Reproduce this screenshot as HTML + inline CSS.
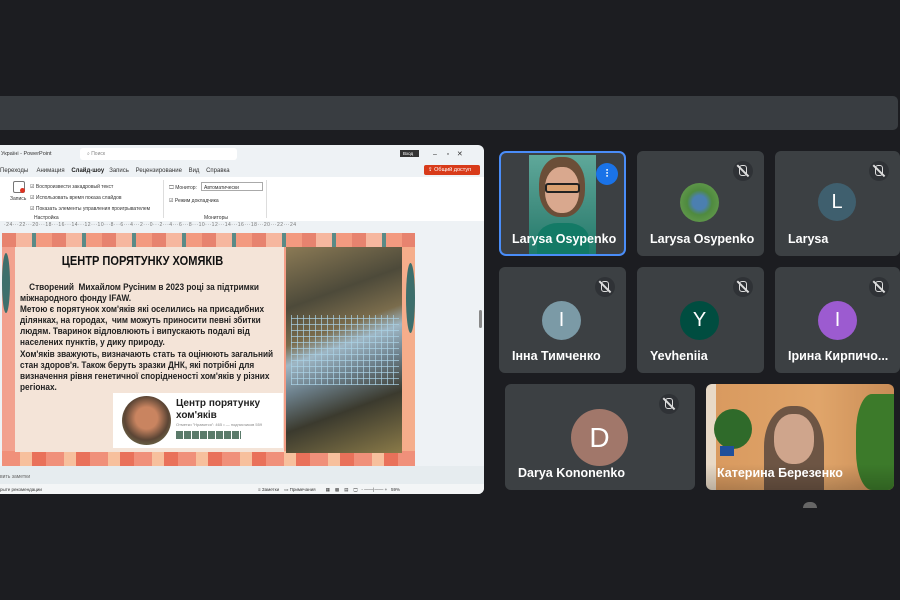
<!DOCTYPE html>
<html><head><meta charset="utf-8"><style>
*{margin:0;padding:0;box-sizing:border-box}
body{width:900px;height:600px;background:#1c1d21;position:relative;overflow:hidden;font-family:"Liberation Sans","DejaVu Sans",sans-serif}
.a{position:absolute}
.tile{position:absolute;background:#3c4043;border-radius:6px;overflow:hidden}
.nm{position:absolute;left:13px;bottom:10px;color:#fff;font-size:12.5px;font-weight:bold;white-space:nowrap}
.av{position:absolute;border-radius:50%;color:#fff;text-align:center;font-size:20px}
.mic{position:absolute;width:20px;height:20px;border-radius:50%;background:#2f3236;top:10px;right:11px}
.pp{font-size:5px;color:#333;white-space:nowrap}
.sl{font-size:9.6px;font-weight:bold;color:#222;line-height:11.1px;white-space:nowrap;transform:scaleX(.86);transform-origin:0 0}
</style></head><body>
<div class="a" style="left:0;top:96px;width:898px;height:34px;background:#393d41;border-radius:0 5px 5px 0"></div>

<div class="a" style="left:0;top:145px;width:484px;height:349px;background:#eef2f5;border-radius:0 6px 6px 0;overflow:hidden">
 <div class="a pp" style="left:1px;top:6px;font-size:5.5px">Україні - PowerPoint</div>
 <div class="a" style="left:80px;top:3px;width:157px;height:12px;background:#fff;border-radius:3px"></div>
 <div class="a pp" style="left:87px;top:6px;color:#888">⌕ Поиск</div>
 <div class="a" style="left:400px;top:5px;width:19px;height:7px;background:#333"></div>
 <div class="a pp" style="left:403px;top:6px;color:#fff;font-size:4.5px">Вход</div>
 <div class="a pp" style="left:433px;top:5px;font-size:7px">–&nbsp;&nbsp;&nbsp;&nbsp;&nbsp;▫&nbsp;&nbsp;&nbsp;&nbsp;✕</div>
 <div class="a pp" style="left:0;top:23px;font-size:6px">Переходы&nbsp;&nbsp;&nbsp;&nbsp;&nbsp;Анимация&nbsp;&nbsp;&nbsp;&nbsp;<b style="color:#222">Слайд-шоу</b>&nbsp;&nbsp;&nbsp;Запись&nbsp;&nbsp;&nbsp;&nbsp;Рецензирование&nbsp;&nbsp;&nbsp;&nbsp;Вид&nbsp;&nbsp;&nbsp;&nbsp;Справка</div>
 <div class="a" style="left:72px;top:32px;width:32px;height:1px;background:#c43e1c"></div>
 <div class="a" style="left:424px;top:20px;width:56px;height:10px;background:#d83b1a;border-radius:2px"></div>
 <div class="a pp" style="left:428px;top:22px;color:#fff;font-size:5.5px">⇪ Общий доступ</div>
 <div class="a" style="left:0;top:32px;width:484px;height:44px;background:#fff"></div>
 <div class="a" style="left:13px;top:36px;width:12px;height:12px;border:1px solid #777;border-radius:2px"></div>
 <div class="a" style="left:20px;top:43px;width:5px;height:5px;border-radius:50%;background:#d32"></div>
 <div class="a pp" style="left:10px;top:51px">Запись</div>
 <div class="a pp" style="left:30px;top:37px;line-height:11px">☑ Воспроизвести закадровый текст<br>☑ Использовать время показа слайдов<br>☑ Показать элементы управления проигрывателем</div>
 <div class="a pp" style="left:34px;top:70px">Настройка</div>
 <div class="a" style="left:163px;top:35px;width:1px;height:38px;background:#ddd"></div>
 <div class="a pp" style="left:169px;top:40px">🖵 Монитор:</div>
 <div class="a" style="left:201px;top:37px;width:62px;height:9px;border:1px solid #aaa"></div>
 <div class="a pp" style="left:204px;top:40px">Автоматически</div>
 <div class="a pp" style="left:169px;top:53px">☑ Режим докладчика</div>
 <div class="a pp" style="left:204px;top:70px">Мониторы</div>
 <div class="a" style="left:266px;top:35px;width:1px;height:38px;background:#ddd"></div>
 <div class="a pp" style="left:4px;top:77px;color:#777;letter-spacing:.5px">·24···22···20···18···16···14···12···10···8···6···4···2···0···2···4···6···8···10···12···14···16···18···20···22···24</div>
 <div class="a" style="left:479px;top:165px;width:3px;height:18px;background:#888;border-radius:2px"></div>
 <div class="a" style="left:2px;top:88px;width:413px;height:233px;background:linear-gradient(90deg,#f2a08e,#f7b59c 30%,#f49a86 60%,#f5ae8b);overflow:hidden">
  <div class="a" style="left:0;top:0;width:413px;height:14px;background:repeating-linear-gradient(90deg,#e7836f 0 14px,#f6b79f 14px 30px,#5a8a86 30px 34px,#f39a80 34px 50px)"></div>
  <div class="a" style="left:0;top:218px;width:413px;height:15px;background:repeating-linear-gradient(90deg,#f0907a 0 18px,#f7c09d 18px 30px,#e9715a 30px 44px)"></div>
  <div class="a" style="left:0;top:20px;width:8px;height:60px;background:#3d6f6c;border-radius:50%"></div>
  <div class="a" style="left:404px;top:30px;width:9px;height:70px;background:#3d6f6c;border-radius:50%"></div>
 </div>
 <div class="a" style="left:15px;top:102px;width:269px;height:205px;background:#f4e4d8"></div>
 <div class="a" style="left:15px;top:108px;width:300px;text-align:center;font-size:13px;font-weight:bold;color:#111;transform:scaleX(.85);transform-origin:0 0">ЦЕНТР ПОРЯТУНКУ ХОМЯКІВ</div>
 <div class="a sl" style="left:20px;top:137px">
 &nbsp;&nbsp;&nbsp;&nbsp;Створений&nbsp; Михайлом Русіним в 2023 році за підтримки<br>міжнародного фонду IFAW.<br>Метою є порятунок хом'яків які оселились на присадибних<br>ділянках, на городах,&nbsp; чим можуть приносити певні збитки<br>людям. Тваринок відловлюють і випускають подалі від<br>населених пунктів, у дику природу.<br>Хом'яків зважують, визначають стать та оцінюють загальний<br>стан здоров'я. Також беруть зразки ДНК, які потрібні для<br>визначення рівня генетичної спорідненості хом'яків у різних<br>регіонах.</div>
 <div class="a" style="left:113px;top:248px;width:170px;height:55px;background:#fff"></div>
 <div class="a" style="left:122px;top:251px;width:49px;height:49px;border-radius:50%;background:radial-gradient(circle at 50% 45%,#c98460 0 30%,#5b4535 60%,#7c8a5c)"></div>
 <div class="a" style="left:176px;top:253px;font-size:10px;font-weight:bold;color:#222;line-height:12px">Центр порятунку<br>хом'яків</div>
 <div class="a pp" style="left:176px;top:277px;color:#888;font-size:4px">Отметки "Нравится": 465 • — подписчиков 559</div>
 <div class="a" style="left:176px;top:286px;width:65px;height:8px;background:repeating-linear-gradient(90deg,#5a7a6a 0 7px,#fff 7px 8px)"></div>
 <div class="a" style="left:286px;top:102px;width:116px;height:206px;background:linear-gradient(160deg,#8b7a55,#4d4a3a 25%,#7a6c4c 40%,#9fb7c5 48%,#6c7f8a 60%,#3b3a2e 75%,#8a7a48)"></div>
 <div class="a" style="left:291px;top:170px;width:108px;height:70px;background:repeating-linear-gradient(90deg,rgba(170,210,230,.7) 0 1px,transparent 1px 6px),repeating-linear-gradient(0deg,rgba(170,210,230,.7) 0 1px,transparent 1px 6px)"></div>
 <div class="a" style="left:0;top:321px;width:484px;height:18px;background:#e6ecef"></div>
 <div class="a pp" style="left:0;top:329px;color:#666">вить заметки</div>
 <div class="a" style="left:0;top:339px;width:484px;height:10px;background:#f3f5f6"></div>
 <div class="a pp" style="left:0;top:342px;font-size:4.5px">рыте рекомендации</div>
 <div class="a pp" style="left:258px;top:342px;font-size:4.5px">≡ Заметки&nbsp;&nbsp;&nbsp;&nbsp;▭ Примечания&nbsp;&nbsp;&nbsp;&nbsp;&nbsp;&nbsp;&nbsp;&nbsp;▦&nbsp;&nbsp;&nbsp;&nbsp;▩&nbsp;&nbsp;&nbsp;&nbsp;▤&nbsp;&nbsp;&nbsp;&nbsp;🖵&nbsp;&nbsp;&nbsp;- ——|—— +&nbsp;&nbsp;&nbsp;59%</div>
</div>

<div class="tile" style="left:499px;top:151px;width:127px;height:105px;border:2px solid #4a8df8;border-radius:7px">
 <div class="a" style="left:28px;top:2px;width:67px;height:101px;background:linear-gradient(180deg,#5fa89a,#3d8a7c 60%,#1e7a6a)"></div>
 <div class="a" style="left:38px;top:4px;width:46px;height:60px;border-radius:45%;background:#6b4e38"></div>
 <div class="a" style="left:44px;top:14px;width:34px;height:46px;border-radius:45%;background:#d9a88e"></div>
 <div class="a" style="left:44px;top:30px;width:35px;height:10px;background:#d9a070;border:2px solid #222;border-radius:3px"></div>
 <div class="a" style="left:36px;top:70px;width:52px;height:40px;border-radius:40% 40% 0 0;background:#137a66"></div>
 <div class="a" style="left:95px;top:10px;width:22px;height:22px;border-radius:50%;background:#1a73e8;color:#fff;font-size:11px;text-align:center;line-height:22px;font-weight:bold">⫶</div>
 <div class="nm" style="left:11px;bottom:8px">Larysa Osypenko</div>
</div>
<div class="tile" style="left:637px;top:151px;width:127px;height:105px">
 <div class="mic"></div>
 <div class="av" style="left:43px;top:32px;width:39px;height:39px;background:radial-gradient(circle,#4b7fb0 0 25%,#4f8a3f 45%,#6ea354)"></div>
 <div class="nm">Larysa Osypenko</div>
</div>
<div class="tile" style="left:775px;top:151px;width:125px;height:105px">
 <div class="mic"></div>
 <div class="av" style="left:43px;top:32px;width:38px;height:38px;background:#3f5f6e;line-height:38px">L</div>
 <div class="nm">Larysa</div>
</div>
<div class="tile" style="left:499px;top:267px;width:127px;height:106px">
 <div class="mic"></div>
 <div class="av" style="left:43px;top:34px;width:39px;height:39px;background:#7b9aa6;line-height:39px">I</div>
 <div class="nm">Інна Тимченко</div>
</div>
<div class="tile" style="left:637px;top:267px;width:127px;height:106px">
 <div class="mic"></div>
 <div class="av" style="left:43px;top:34px;width:39px;height:39px;background:#004d40;line-height:39px">Y</div>
 <div class="nm">Yevheniia</div>
</div>
<div class="tile" style="left:775px;top:267px;width:125px;height:106px">
 <div class="mic"></div>
 <div class="av" style="left:43px;top:34px;width:39px;height:39px;background:#9c5bd0;line-height:39px">I</div>
 <div class="nm">Ірина Кирпичо...</div>
</div>
<div class="tile" style="left:505px;top:384px;width:190px;height:106px">
 <div class="mic" style="right:16px"></div>
 <div class="av" style="left:66px;top:25px;width:57px;height:57px;background:#a1776a;line-height:57px;font-size:28px">D</div>
 <div class="nm">Darya Kononenko</div>
</div>
<div class="tile" style="left:706px;top:384px;width:188px;height:106px;background:linear-gradient(90deg,#e8d9c6 0 10px,#d99a5f 10px,#e0a56a 60%,#c98c56)">
 <div class="a" style="left:8px;top:25px;width:38px;height:40px;border-radius:50%;background:#2f6a2a"></div>
 <div class="a" style="left:14px;top:62px;width:14px;height:10px;background:#1f4f9a"></div>
 <div class="a" style="left:150px;top:10px;width:40px;height:96px;border-radius:40% 0 0 40%;background:#3c7a2a"></div>
 <div class="a" style="left:58px;top:22px;width:60px;height:90px;border-radius:45% 45% 0 0;background:#6d5544"></div>
 <div class="a" style="left:68px;top:30px;width:40px;height:50px;border-radius:45%;background:#cfa58c"></div>
 <div class="a" style="left:0;top:80px;width:188px;height:26px;background:linear-gradient(180deg,rgba(0,0,0,0),rgba(0,0,0,.2))"></div>
 <div class="nm" style="left:11px">Катерина Березенко</div>
</div>
<div class="a" style="left:803px;top:502px;width:14px;height:6px;border-radius:7px 7px 0 0;background:#666"></div>

<style>.mic::after{content:"";position:absolute;left:6px;top:4px;width:6px;height:9px;border:1.5px solid #ddd;border-radius:3px}.mic::before{content:"";position:absolute;left:9px;top:2px;width:1.5px;height:16px;background:#ddd;transform:rotate(-45deg)}</style>
</body></html>
